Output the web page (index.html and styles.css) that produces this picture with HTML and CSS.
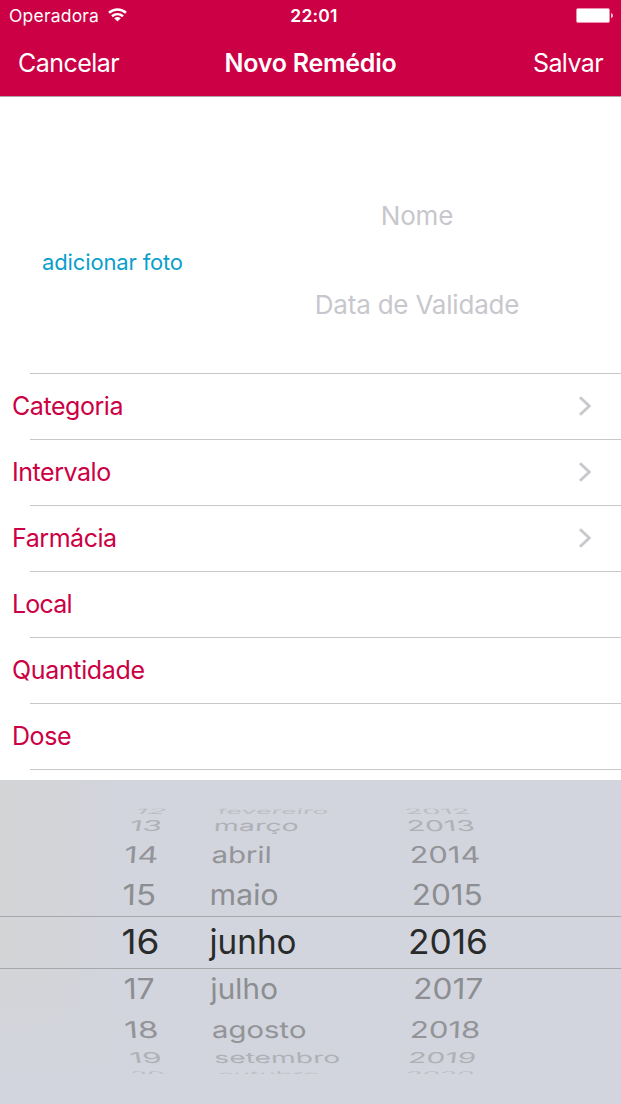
FILE: index.html
```html
<!DOCTYPE html>
<html lang="pt-BR">
<head>
<meta charset="utf-8">
<title>Novo Remédio</title>
<link rel="stylesheet" href="styles.css">
</head>
<body>
<div class="screen">
  <header class="header">
    <div class="status">
      <div class="carrier"><span class="carrier-name">Operadora</span>
        <svg class="wifi" width="20" height="14" viewBox="0 0 20 14"><g fill="none" stroke="#fff" stroke-width="2.500"><path d="M1 4.800C6 .3 13 .3 18 4.800"/><path d="M4 8.200C7.200 5.500 11.800 5.500 15 8.200"/></g><path d="M6.200 10.300Q9.500 7.800 12.800 10.300L9.500 13.500Z" fill="#fff"/></svg>
      </div>
      <span class="clock">22:01</span>
      <svg class="battery" width="37" height="15" viewBox="0 0 37 15"><rect x=".5" y=".5" width="33" height="14" rx="1.500" fill="#fff" stroke="#e991ad"/><path d="M35 5Q37 5.500 37 7.500T35 10Z" fill="#f5c8d6"/></svg>
    </div>
    <nav class="nav">
      <span class="cancel">Cancelar</span>
      <h1 class="title">Novo Remédio</h1>
      <span class="save">Salvar</span>
    </nav>
  </header>
  <section class="summary">
    <div class="photo"><span>adicionar foto</span></div>
    <div class="fields"><span class="name">Nome</span><span class="expiry">Data de Validade</span></div>
  </section>
  <ul class="rows">
    <li class="row"><span class="label">Categoria</span><svg class="chevron" width="14" height="20" viewBox="0 0 14 20"><path d="M2 1.200L11.300 10L2 18.800"/></svg></li>
    <li class="row"><span class="label low">Intervalo</span><svg class="chevron" width="14" height="20" viewBox="0 0 14 20"><path d="M2 1.200L11.300 10L2 18.800"/></svg></li>
    <li class="row"><span class="label low">Farmácia</span><svg class="chevron" width="14" height="20" viewBox="0 0 14 20"><path d="M2 1.200L11.300 10L2 18.800"/></svg></li>
    <li class="row"><span class="label tight">Local</span></li>
    <li class="row"><span class="label loose">Quantidade</span></li>
    <li class="row"><span class="label">Dose</span></li>
  </ul>
  <div class="picker">
    <svg class="wheel" width="621" height="324" viewBox="0 0 621 324">
      <defs><clipPath id="drum"><rect y="28.500" width="621" height="265.500"/></clipPath></defs>
      <path class="band" d="M0 136.500H621M0 188.500H621"/>
      <g clip-path="url(#drum)">
        <g class="edge">
          <text transform="matrix(1 0 -.2 .23 133 34)" textLength="31" lengthAdjust="spacingAndGlyphs">12</text>
          <text transform="matrix(1 0 -.05 .23 217 34)" textLength="111" lengthAdjust="spacingAndGlyphs">fevereiro</text>
          <text transform="matrix(1 0 .1 .23 406 34)" textLength="65" lengthAdjust="spacingAndGlyphs">2012</text>
          <text transform="matrix(1 0 .2 .23 134 296.500)" textLength="34" lengthAdjust="spacingAndGlyphs">20</text>
          <text transform="matrix(1 0 .05 .23 218 296.500)" textLength="102" lengthAdjust="spacingAndGlyphs">outubro</text>
          <text transform="matrix(1 0 -.1 .23 404 296.500)" textLength="69" lengthAdjust="spacingAndGlyphs">2020</text>
        </g>
        <g class="far">
          <text transform="matrix(1 0 -.08 .43 129 50.700)" textLength="32" lengthAdjust="spacingAndGlyphs">13</text>
          <text transform="matrix(1 0 -.03 .43 213.500 50.700)" textLength="85" lengthAdjust="spacingAndGlyphs">março</text>
          <text transform="matrix(1 0 .06 .43 407.500 50.700)" textLength="68" lengthAdjust="spacingAndGlyphs">2013</text>
          <text transform="matrix(1 0 .08 .43 130.500 283.300)" textLength="32" lengthAdjust="spacingAndGlyphs">19</text>
          <text transform="matrix(1 0 .03 .43 214.500 283.300)" textLength="126" lengthAdjust="spacingAndGlyphs">setembro</text>
          <text transform="matrix(1 0 -.06 .43 407.500 283.300)" textLength="68" lengthAdjust="spacingAndGlyphs">2019</text>
        </g>
        <g class="mid">
          <text transform="matrix(1 0 -.05 .67 123.800 82.500)" textLength="34" lengthAdjust="spacingAndGlyphs">14</text>
          <text transform="matrix(1 0 -.01 .67 211.500 82.500)" textLength="60" lengthAdjust="spacingAndGlyphs">abril</text>
          <text transform="matrix(1 0 .03 .67 410 82.500)" textLength="70.500" lengthAdjust="spacingAndGlyphs">2014</text>
          <text transform="matrix(1 0 .05 .67 125 257.800)" textLength="34" lengthAdjust="spacingAndGlyphs">18</text>
          <text transform="matrix(1 0 .01 .67 212 257.800)" textLength="94.500" lengthAdjust="spacingAndGlyphs">agosto</text>
          <text transform="matrix(1 0 -.03 .67 409.500 257.800)" textLength="70.500" lengthAdjust="spacingAndGlyphs">2018</text>
        </g>
        <g class="near">
          <text transform="matrix(1 0 -.02 .84 122.200 125.200)" textLength="33.700" lengthAdjust="spacingAndGlyphs">15</text>
          <text transform="matrix(1 0 -.01 .84 209.500 125.200)" textLength="69" lengthAdjust="spacingAndGlyphs">maio</text>
          <text transform="matrix(1 0 .02 .84 412 125.200)" textLength="71" lengthAdjust="spacingAndGlyphs">2015</text>
          <text transform="matrix(1 0 .02 .84 124 219)" textLength="31" lengthAdjust="spacingAndGlyphs">17</text>
          <text transform="matrix(1 0 .01 .84 210.500 219)" textLength="67.500" lengthAdjust="spacingAndGlyphs">julho</text>
          <text transform="matrix(1 0 -.02 .84 413 219)" textLength="70" lengthAdjust="spacingAndGlyphs">2017</text>
        </g>
        <g class="selected">
          <text x="121.500" y="174" textLength="38" lengthAdjust="spacingAndGlyphs">16</text>
          <text x="209.500" y="174" textLength="87" lengthAdjust="spacingAndGlyphs">junho</text>
          <text x="408" y="174" textLength="80" lengthAdjust="spacingAndGlyphs">2016</text>
        </g>
      </g>
    </svg>
  </div>
</div>
</body>
</html>
```
FILE: styles.css
```css
* { box-sizing: border-box; }
body { margin: 0; background: #fff; font-family: Inter, "Liberation Sans", sans-serif; }
.screen { width: 621px; height: 1104px; display: flex; flex-direction: column; overflow: hidden; }
.header { height: 97px; background: #cc0044; color: #fff; border-bottom: 1px solid #b3a3a7; }
.status { height: 31px; display: grid; grid-template-columns: 1fr auto 1fr; align-items: center; padding: 0 8px 0 9px; }
.carrier { display: flex; align-items: center; gap: 9px; font-size: 17.500px; line-height: 31px; }
.carrier-name { letter-spacing: 0.2px; }
.wifi { margin-top: -2px; }
.clock { font-size: 17.500px; font-weight: 600; line-height: 31px; padding-left: 6px; letter-spacing: 0.2px; }
.battery { justify-self: end; }
.nav { height: 65px; display: grid; grid-template-columns: 1fr auto 1fr; align-items: center; padding: 0 18px; font-size: 25px; line-height: 65px; }
.title { margin: 0; font-size: 25px; font-weight: 600; letter-spacing: -0.25px; }
.cancel { letter-spacing: -0.55px; }
.save { justify-self: end; letter-spacing: -0.6px; }
.summary { height: 276px; display: flex; }
.photo { width: 225px; padding-top: 149px; text-align: center; color: #0a9fcb; font-size: 22px; line-height: 32px; letter-spacing: -0.15px; }
.fields { width: 384px; display: flex; flex-direction: column; gap: 57px; align-items: center; padding-top: 103px; color: #c7c7cd; font-size: 26px; line-height: 32px; letter-spacing: -0.2px; }
.rows { list-style: none; margin: 0; padding: 0; height: 407px; background: linear-gradient(#c8c7cc, #c8c7cc) 30px 396px / 591px 1px no-repeat; }
.row { height: 66px; display: flex; align-items: center; justify-content: space-between; padding: 0 29px 1px 12px; color: #cc0044; font-size: 25px; background: linear-gradient(#c8c7cc, #c8c7cc) 30px 0 / 591px 1px no-repeat; }
.label { letter-spacing: -0.45px; }
.low { margin-top: 1px; }
.tight { letter-spacing: -0.8px; }
.loose { letter-spacing: -0.35px; }
.chevron path { fill: none; stroke: #c7c7cc; stroke-width: 2.800; }
.picker { height: 324px; background: linear-gradient(to bottom, rgba(210,213,221,0) 55%, #d2d5dd 90%), linear-gradient(to right, #d3d4d6 0, #d3d4d7 50px, #d2d5dd 115px, #d2d5dd 100%); }
.wheel { display: block; font-size: 34.500px; }
.band { stroke: #a6a8ac; stroke-width: 1; }
.edge { fill: #bbbec3; }
.far { fill: #afb1b6; }
.mid { fill: #929498; }
.near { fill: #8c8e91; }
.selected { fill: #292b2b; }
```
